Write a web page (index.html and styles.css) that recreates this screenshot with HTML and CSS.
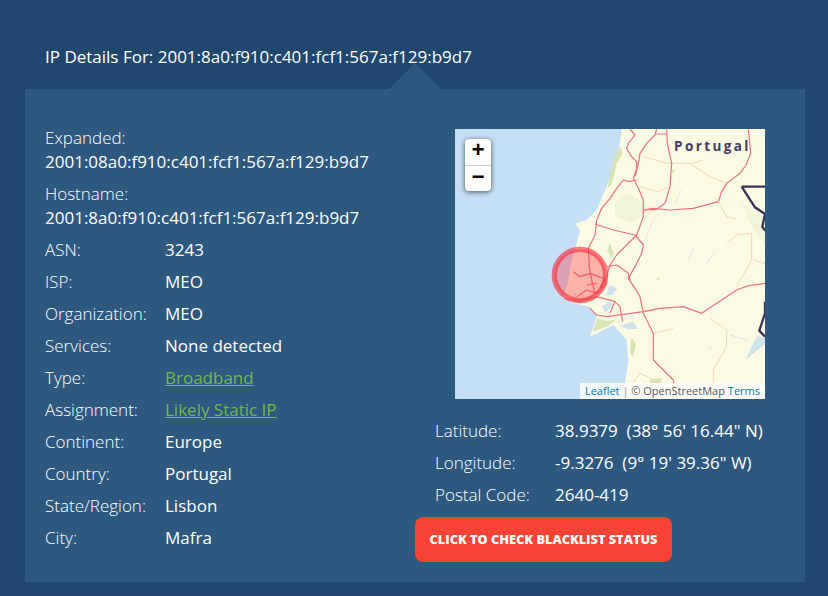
FILE: index.html
```html
<!DOCTYPE html>
<html lang="en">
  <head>
    <meta charset="UTF-8" />
    <meta name="viewport" content="width=device-width, initial-scale=1.0" />
    <title>IP Details</title>
    <link rel="stylesheet" href="styles.css">
  </head>
  <body>
    <h2 class="title">IP Details For: 2001:8a0:f910:c401:fcf1:567a:f129:b9d7</h2>

    <section class="panel">
      <div class="details">
        <p class="stack"><span class="label">Expanded:</span><span class="value">2001:08a0:f910:c401:fcf1:567a:f129:b9d7</span></p>
        <p class="stack"><span class="label">Hostname:</span><span class="value">2001:8a0:f910:c401:fcf1:567a:f129:b9d7</span></p>
        <p class="row"><span class="label">ASN:</span><span class="value">3243</span></p>
        <p class="row"><span class="label">ISP:</span><span class="value">MEO</span></p>
        <p class="row"><span class="label">Organization:</span><span class="value">MEO</span></p>
        <p class="row"><span class="label">Services:</span><span class="value">None detected</span></p>
        <p class="row"><span class="label">Type:</span><a class="value link" href="#">Broadband</a></p>
        <p class="row"><span class="label">Assignment:</span><a class="value link" href="#">Likely Static IP</a></p>
        <p class="row"><span class="label">Continent:</span><span class="value">Europe</span></p>
        <p class="row"><span class="label">Country:</span><span class="value">Portugal</span></p>
        <p class="row"><span class="label">State/Region:</span><span class="value">Lisbon</span></p>
        <p class="row"><span class="label">City:</span><span class="value">Mafra</span></p>
      </div>

      <div class="side">
        <div class="map">
          <svg class="tiles" viewBox="45 27 930 810" width="310" height="270" aria-hidden="true">
            <rect x="45" y="27" width="930" height="810" fill="#c5dff6" />
            <path class="land" d="M545 27L540 70L525 130L500 200L470 270L440 300L405 312L420 330L410 370L395 420L385 480L370 530L400 550L450 560L470 590L450 650L520 615L560 660L565 720L555 790L555 837H975V27Z" />

            <path class="forest" d="M542 78L528 100L512 150L502 205L516 190L530 130L548 100Z" />
            <path class="forest pale" d="M560 220L525 250L525 285L570 310L610 285L615 250Z" />
            <path class="forest pale" d="M905 250L975 290V370L935 320Z" />
            <path class="forest" d="M508 368L522 400L514 415L503 392Z" />
            <path class="forest" d="M472 595L458 635L505 618L530 598L500 603Z" />
            <path class="forest" d="M574 652L588 672L578 712L570 698Z" />
            <path class="forest" d="M632 778L665 774L662 792L628 788Z" />
            <path class="forest" d="M694 150L706 146L699 162Z" />
            <path class="forest" d="M650 472L660 476L654 484Z" />
            <path class="forest" d="M400 525L410 517L405 528Z" />

            <path class="water" d="M508 494L532 506L516 526L498 526Z" />
            <path class="water" d="M485 558L510 545L520 555L496 578Z" />
            <path class="water" d="M538 618L578 605L594 626L564 628Z" />
            <path class="water" d="M952 648L975 654V672L928 710L916 722L934 682Z" />
            <path class="river" d="M705 250L725 210M745 420L760 385M795 435L825 395M870 645L920 660M805 690L820 680M600 400L640 300L660 280" />

            <path class="minor" d="M610 110L680 130L760 130L790 120M750 130L810 170L860 190M835 245L860 290L890 297M600 200L650 215L690 200M860 370L890 345L935 340L935 420L890 500M810 595L860 630L860 680L820 750L820 837M640 640L700 625M645 780L600 760L570 800M640 270L610 300M975 430L940 420" />

            <path class="road" d="M570 27L585 45L565 70L560 85L575 110L590 125L590 145L580 175L595 205L610 240L610 290L590 345L560 375L530 405L510 435L500 470L480 505" />
            <path class="road" d="M650 27L645 45L620 70L600 100L595 130L585 170M648 42L680 42" />
            <path class="road" d="M680 27L682 70L695 130L690 200L675 250L650 268L610 270" />
            <path class="road" d="M925 27L932 100L918 135L900 160L860 190L845 215L835 245L760 265L690 270L640 265L610 270" />
            <path class="road" d="M590 180L565 185L550 180L530 205L510 235L485 265L470 300L465 345L445 385L448 440L455 480L465 520" />
            <path class="road" d="M465 312L520 330L585 345L610 375L605 400L585 440L565 475L585 505L600 530L610 580L640 640L640 720L700 780L710 837" />
            <path class="road" d="M975 490L925 497L890 510L830 550L785 580L730 560L660 565L610 575L500 590L470 585L450 565" />
            <path class="road" d="M500 440L530 435L565 460L570 480" />
            <path class="road" d="M400 455L420 470L450 460L490 475L500 490L470 520L440 510L410 530M375 535L420 545L470 530L525 545L540 560L548 605M470 490L440 495M525 545L510 580" />
            <path class="border" d="M905 200H975M905 200L945 262L975 282L967 320L975 332M975 545V580L958 632L975 650" />

            <circle class="spot" cx="420" cy="465" r="77" />
          </svg>

          <span class="country">Portugal</span>

          <div class="zoom">
            <a href="#">+</a>
            <a href="#">&#8722;</a>
          </div>

          <div class="credit"><a href="#">Leaflet</a> <span class="pipe">|</span> &copy; OpenStreetMap <a href="#">Terms</a></div>
        </div>

        <div class="coords">
          <p class="row"><span class="label">Latitude:</span><span class="value">38.9379&nbsp; (38&deg; 56' 16.44" N)</span></p>
          <p class="row"><span class="label">Longitude:</span><span class="value">-9.3276&nbsp; (9&deg; 19' 39.36" W)</span></p>
          <p class="row"><span class="label">Postal Code:</span><span class="value">2640-419</span></p>
        </div>

        <a class="check" href="#">Click to check blacklist status</a>
      </div>
    </section>
  </body>
</html>
```

FILE: styles.css
```css
* {
  margin: 0;
  padding: 0;
  box-sizing: border-box;
}

body {
  background-color: #20486f;
  color: white;
  font-family: "Open Sans", sans-serif;
  font-size: 17px;
  line-height: 24px;
  height: 596px;
  overflow: hidden;
  padding: 45px 23px 0 25px;
}

.title {
  font-size: 17px;
  font-weight: 400;
  padding-left: 20px;
  height: 44px;
}

.panel {
  position: relative;
  background-color: #2d5880;
  height: 493px;
  padding: 37px 20px 0;
  display: flex;
}

.panel::before {
  content: "";
  position: absolute;
  top: -26px;
  left: 364px;
  border-left: 26px solid transparent;
  border-right: 26px solid transparent;
  border-bottom: 26px solid #2d5880;
}

.details {
  width: 370px;
  flex: none;
}

.stack {
  padding-bottom: 8px;
}

.stack span {
  display: block;
}

.row {
  display: flex;
  padding-bottom: 8px;
}

.label {
  font-weight: 300;
}

.row .label {
  width: 120px;
  flex: none;
}

.link {
  color: #72b84c;
  text-decoration: underline;
}

.side {
  width: 375px;
  padding-top: 3px;
}

.map {
  position: relative;
  width: 310px;
  height: 270px;
  margin-left: 40px;
  overflow: hidden;
}

.tiles {
  display: block;
  filter: blur(0.35px);
}

.land {
  fill: #fdfbe4;
}

.forest {
  fill: #d8e4b6;
}

.pale {
  opacity: 0.3;
}

.water {
  fill: #cfe3ec;
}

.river {
  fill: none;
  stroke: #dceaec;
  stroke-width: 3;
}

.minor {
  fill: none;
  stroke: #f8d6b8;
  stroke-width: 3;
  stroke-linejoin: round;
}

.road {
  fill: none;
  stroke: #ee7378;
  stroke-width: 3.6;
  stroke-linejoin: round;
}

.border {
  fill: none;
  stroke: #3c3158;
  stroke-width: 7;
}

.spot {
  fill: rgba(255, 60, 70, 0.38);
  stroke: rgba(245, 50, 65, 0.65);
  stroke-width: 16;
}

.country {
  position: absolute;
  top: 5px;
  left: 219px;
  font-size: 13.5px;
  font-weight: 700;
  letter-spacing: 2.4px;
  color: #453a63;
}

.zoom {
  position: absolute;
  top: 10px;
  left: 10px;
  width: 26px;
  border-radius: 4px;
  background: white;
  box-shadow: 0 1px 5px rgba(0, 0, 0, 0.65);
}

.zoom a {
  display: block;
  height: 26px;
  color: black;
  font-family: "Liberation Mono", monospace;
  font-size: 22px;
  font-weight: 700;
  line-height: 26px;
  text-align: center;
  text-decoration: none;
}

.zoom a + a {
  border-top: 1px solid #ccc;
}

.credit {
  position: absolute;
  right: 0;
  bottom: 0;
  padding: 0 5px;
  background: rgba(255, 255, 255, 0.8);
  color: #555;
  font-size: 11px;
  line-height: 16px;
}

.credit a {
  color: #0078a8;
  text-decoration: none;
}

.pipe {
  color: #999;
}

.coords {
  padding: 20px 0 0 20px;
}

.check {
  display: inline-block;
  margin-top: 2px;
  width: 257px;
  height: 45px;
  background-color: #f74236;
  border-radius: 8px;
  color: white;
  font-size: 12.75px;
  font-weight: 800;
  line-height: 45px;
  text-align: center;
  text-decoration: none;
  text-transform: uppercase;
}
```
